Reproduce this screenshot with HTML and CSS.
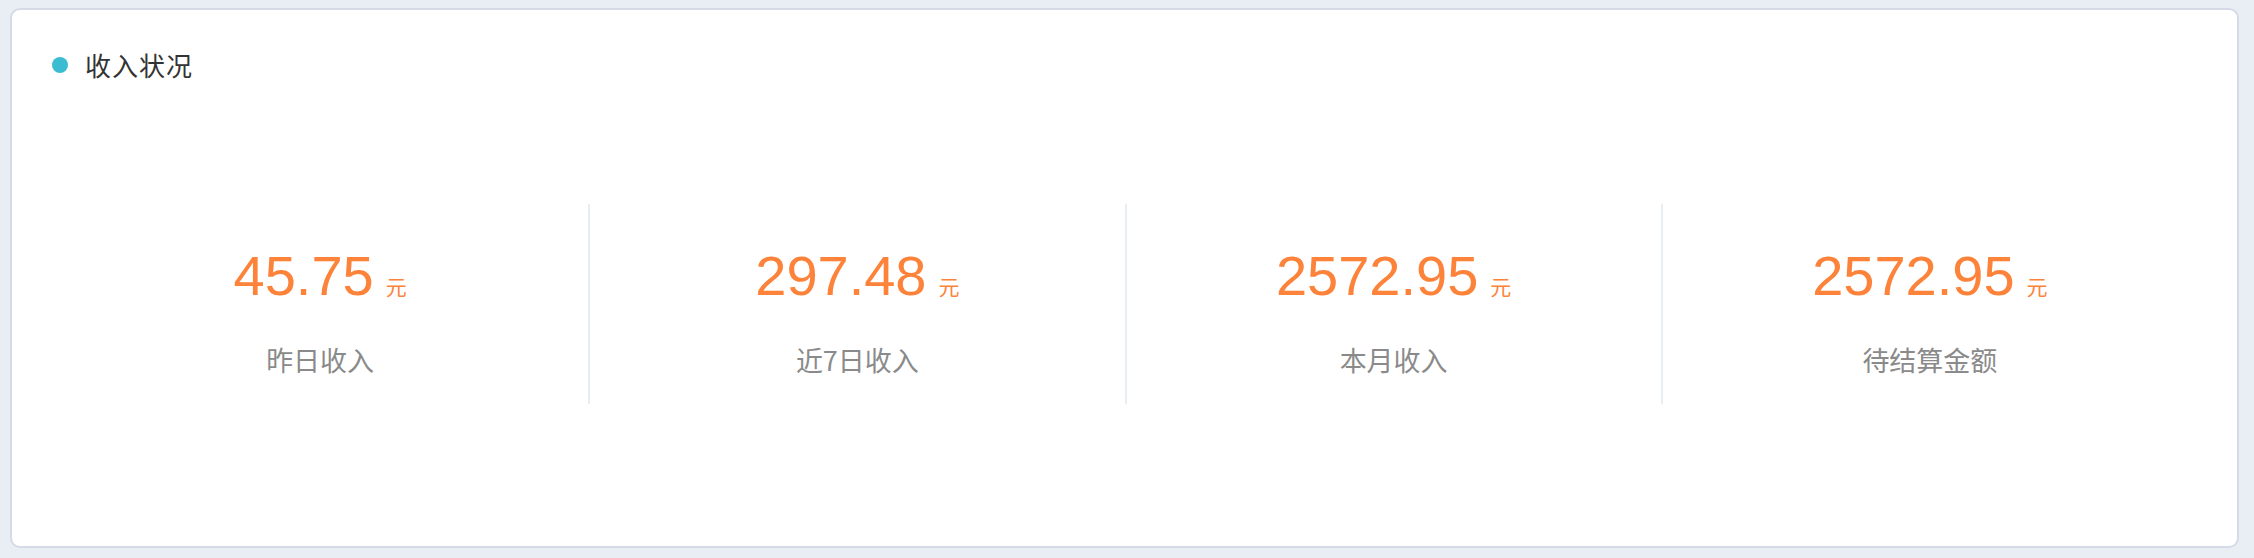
FILE: index.html
```html
<!DOCTYPE html>
<html lang="zh-CN">
<head>
<meta charset="utf-8">
<title>收入状况</title>
<link rel="stylesheet" href="styles.css">
</head>
<body>
<div class="card">
  <div class="card-header">
    <span class="dot"></span>
    <span class="title">收入状况</span>
  </div>
  <div class="stats">
    <div class="stat">
      <div class="value"><span class="num">45.75</span><span class="unit">元</span></div>
      <div class="label">昨日收入</div>
    </div>
    <div class="stat">
      <div class="value"><span class="num">297.48</span><span class="unit">元</span></div>
      <div class="label">近7日收入</div>
    </div>
    <div class="stat">
      <div class="value"><span class="num">2572.95</span><span class="unit">元</span></div>
      <div class="label">本月收入</div>
    </div>
    <div class="stat">
      <div class="value"><span class="num">2572.95</span><span class="unit">元</span></div>
      <div class="label">待结算金额</div>
    </div>
  </div>
</div>
</body>
</html>
```

FILE: styles.css
```css
html, body {
  margin: 0;
  padding: 0;
  background: #e9edf4;
}
body {
  padding: 8px 15px 10px 10px;
  font-family: "Noto Sans CJK SC", "Liberation Sans", sans-serif;
}
.card {
  box-sizing: border-box;
  height: 540px;
  background: #ffffff;
  border: 2px solid #d5dbe6;
  border-radius: 10px;
  padding: 42px 40px 0 40px;
}
.card-header {
  display: flex;
  align-items: center;
  height: 26px;
}
.dot {
  width: 16px;
  height: 16px;
  border-radius: 50%;
  background: #3bbcd0;
  margin-right: 17px;
}
.title {
  font-size: 26px;
  line-height: 26px;
  color: #333333;
  letter-spacing: 1px;
}
.stats {
  display: grid;
  grid-template-columns: repeat(4, 1fr);
  margin-top: 126px;
}
.stat {
  height: 200px;
  display: flex;
  flex-direction: column;
  align-items: center;
  padding-top: 44px;
  box-sizing: border-box;
}
.stat + .stat {
  border-left: 2px solid #e8ecf3;
}
.value {
  display: flex;
  align-items: baseline;
  color: #fd823a;
}
.num {
  font-family: "Liberation Sans", Arial, sans-serif;
  font-size: 56px;
  line-height: 56px;
}
.unit {
  font-size: 21px;
  line-height: 21px;
  margin-left: 12px;
}
.label {
  margin-top: 42px;
  font-size: 27px;
  line-height: 27px;
  color: #8a8a8a;
}
```
